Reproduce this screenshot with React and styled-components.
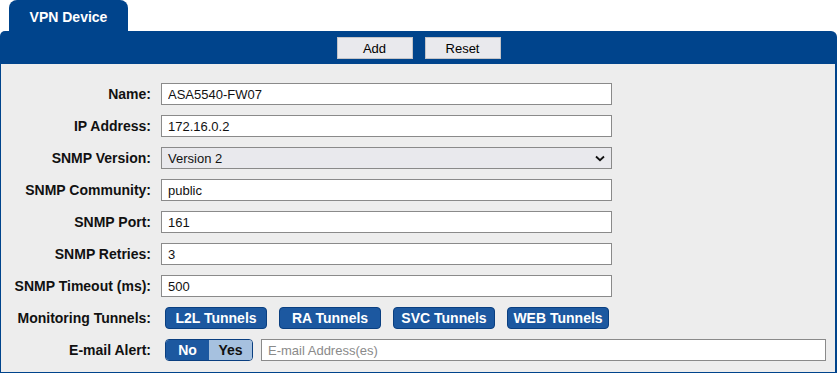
import React from "react";
import styled, { createGlobalStyle } from "styled-components";

const Global = createGlobalStyle`
  html, body {
    margin: 0;
    padding: 0;
    background: #ffffff;
    font-family: "Liberation Sans", Arial, sans-serif;
  }
`;

const Wrap = styled.div`
  width: 837px;
  height: 373px;
  display: flex;
  flex-direction: column;
`;

const Tab = styled.div`
  margin-left: 9px;
  width: 119px;
  height: 31px;
  background: #00448c;
  color: #ffffff;
  border-radius: 8px 8px 0 0;
  font-size: 14px;
  font-weight: bold;
  display: flex;
  align-items: center;
  justify-content: center;
  padding-top: 2px;
  box-sizing: border-box;
`;

const Toolbar = styled.div`
  height: 33px;
  background: #00448c;
  border-radius: 5px 6px 0 0;
  display: flex;
  align-items: center;
  justify-content: center;
  gap: 12px;
  padding-top: 1px;
  box-sizing: border-box;
`;

const ToolButton = styled.button`
  width: 76px;
  height: 22px;
  background: #e9e9ed;
  border: 1px solid #c4c4c8;
  font-family: "Liberation Sans", Arial, sans-serif;
  font-size: 13px;
  color: #000;
  padding: 0;
`;

const Body = styled.div`
  flex: 1;
  background: #ededed;
  border: 1px solid #00448c;
  border-top: none;
  border-right-width: 2px;
  padding: 19px 0 0 0;
  display: grid;
  grid-template-columns: 150px 1fr;
  grid-auto-rows: 22px;
  column-gap: 10px;
  row-gap: 10px;
  align-content: start;
`;

const Label = styled.label`
  font-size: 14px;
  font-weight: bold;
  color: #111;
  display: flex;
  align-items: center;
  justify-content: flex-end;
`;

const Field = styled.input`
  width: ${p => p.$w || 451}px;
  height: 22px;
  box-sizing: border-box;
  border: 1px solid #8a8a8a;
  background: #ffffff;
  font-family: "Liberation Sans", Arial, sans-serif;
  font-size: 13px;
  padding: 0 6px;
  color: #111;
  outline: none;
  &::placeholder {
    color: #8a8a8a;
  }
`;

const Select = styled.div`
  width: 451px;
  height: 22px;
  box-sizing: border-box;
  border: 1px solid #8a8a8a;
  background: #e9e9ed;
  font-size: 13px;
  padding: 0 6px;
  color: #111;
  display: flex;
  align-items: center;
  justify-content: space-between;
`;

const Inline = styled.div`
  display: flex;
  align-items: center;
  gap: ${p => p.$gap || 12}px;
  margin-left: 4px;
`;

const TunnelButton = styled.button`
  flex: 0 0 102px;
  height: 22px;
  box-sizing: border-box;
  background: #1c58a0;
  border: 1px solid #0a3f80;
  border-radius: 4px;
  color: #ffffff;
  font-family: "Liberation Sans", Arial, sans-serif;
  font-size: 14px;
  font-weight: bold;
  padding: 0;
`;

const Toggle = styled.div`
  flex: 0 0 88px;
  height: 22px;
  box-sizing: border-box;
  border: 1px solid #0a3f80;
  border-radius: 4px;
  overflow: hidden;
  display: flex;
`;

const ToggleOpt = styled.div`
  flex: ${p => (p.$on ? "0 0 43px" : "1")};
  background: ${p => (p.$on ? "#1c58a0" : "#a6c1df")};
  color: ${p => (p.$on ? "#ffffff" : "#111111")};
  font-size: 14px;
  font-weight: bold;
  display: flex;
  align-items: center;
  justify-content: center;
`;

const Chevron = () => (
  <svg width="10" height="7" viewBox="0 0 10 7">
    <path d="M1 1.5 L5 5.2 L9 1.5" fill="none" stroke="#111" strokeWidth="1.8" />
  </svg>
);

const rows = [
  ["Name:", "ASA5540-FW07"],
  ["IP Address:", "172.16.0.2"],
];

const rows2 = [
  ["SNMP Community:", "public"],
  ["SNMP Port:", "161"],
  ["SNMP Retries:", "3"],
  ["SNMP Timeout (ms):", "500"],
];

const App = () => {
  return (
    <Wrap>
      <Global />
      <Tab>VPN Device</Tab>
      <Toolbar>
        <ToolButton>Add</ToolButton>
        <ToolButton>Reset</ToolButton>
      </Toolbar>
      <Body>
        {rows.map(([l, v]) => (
          <React.Fragment key={l}>
            <Label>{l}</Label>
            <Field defaultValue={v} />
          </React.Fragment>
        ))}
        <Label>SNMP Version:</Label>
        <Select>
          <span>Version 2</span>
          <Chevron />
        </Select>
        {rows2.map(([l, v]) => (
          <React.Fragment key={l}>
            <Label>{l}</Label>
            <Field defaultValue={v} />
          </React.Fragment>
        ))}
        <Label>Monitoring Tunnels:</Label>
        <Inline>
          <TunnelButton>L2L Tunnels</TunnelButton>
          <TunnelButton>RA Tunnels</TunnelButton>
          <TunnelButton>SVC Tunnels</TunnelButton>
          <TunnelButton>WEB Tunnels</TunnelButton>
        </Inline>
        <Label>E-mail Alert:</Label>
        <Inline $gap={8}>
          <Toggle>
            <ToggleOpt $on>No</ToggleOpt>
            <ToggleOpt>Yes</ToggleOpt>
          </Toggle>
          <Field $w={565} placeholder="E-mail Address(es)" />
        </Inline>
      </Body>
    </Wrap>
  );
};

export default App;
